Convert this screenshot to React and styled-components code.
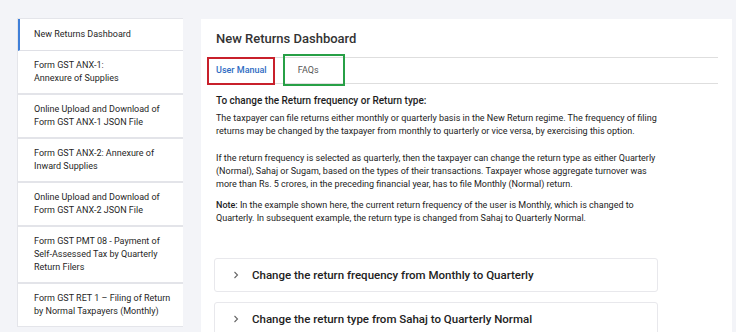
import React from "react";
import styled, { createGlobalStyle } from "styled-components";

const GlobalStyle = createGlobalStyle`
  body {
    margin: 0;
    background: #f3f4f8;
    font-family: Roboto, "Liberation Sans", sans-serif;
    color: #212121;
  }
`;

const Page = styled.div`
  display: flex;
  align-items: flex-start;
  gap: 18px;
  padding: 18px 4px 0 17px;
  height: 332px;
  box-sizing: border-box;
  overflow: hidden;
`;

const SideColumn = styled.div`
  display: flex;
  flex-direction: column;
  gap: 7px;
  width: 166px;
  flex-shrink: 0;
`;

const Menu = styled.div`
  background: #fff;
  border: 1px solid #e4e5ea;
  border-right: none;
`;

const MenuItem = styled.div`
  padding: ${(p) => (p.$active ? "9px 6px 9px 14px" : "8px 6px 8px 16px")};
  border-left: ${(p) => (p.$active ? "2px solid #3f7fd8" : "none")};
  border-bottom: ${(p) => (p.$last ? "none" : p.$active ? "1px solid #dfe0e6" : "2px solid #e3e4e9")};
  font-size: 9px;
  line-height: 13px;
  color: #1f1f1f;
  white-space: nowrap;
`;

const NextCard = styled.div`
  height: 12px;
  background: #fff;
  border: 1px solid #c9cad3;
  border-radius: 4px;
`;

const Panel = styled.div`
  flex: 1;
  margin-top: 1px;
  background: #fff;
  padding: 12px 14px 0 15px;
  height: 340px;
`;

const Title = styled.h1`
  margin: 0 0 10px;
  font-size: 13px;
  line-height: 16px;
  font-weight: 500;
  color: #333;
`;

const TabRow = styled.div`
  display: flex;
  align-items: center;
  gap: 31px;
  height: 27px;
  box-sizing: border-box;
  border-top: 1px solid #dedede;
  border-bottom: 1px solid #dedede;
`;

const Tab = styled.div`
  position: relative;
  font-size: 9px;
  line-height: 25px;
  color: ${(p) => (p.$active ? "#2f6cc3" : "#555")};
  font-weight: ${(p) => (p.$active ? 500 : 400)};
`;

const Highlight = styled.span`
  position: absolute;
  top: ${(p) => p.$top}px;
  bottom: ${(p) => p.$bottom}px;
  left: ${(p) => p.$left}px;
  right: ${(p) => p.$right}px;
  border: 2px solid ${(p) => p.$color};
  pointer-events: none;
`;

const Content = styled.div`
  margin-top: 10px;
  max-width: 452px;
`;

const Heading = styled.div`
  font-size: 10px;
  line-height: 13px;
  font-weight: 500;
  color: #1d1d1d;
  margin-bottom: 5px;
`;

const Para = styled.p`
  margin: 0 0 ${(p) => p.$gap || 0}px;
  font-size: 9px;
  line-height: 13px;
  color: #222;
`;

const Strong = styled.span`
  font-weight: 500;
`;

const Accordions = styled.div`
  display: flex;
  flex-direction: column;
  gap: 10px;
  width: 444px;
  margin: 33px 0 0 -2px;
`;

const AccordionHead = styled.div`
  display: flex;
  align-items: center;
  gap: 13px;
  height: 34px;
  box-sizing: border-box;
  padding-left: 18px;
  border: 1px solid #e8e8ec;
  border-radius: 3px;
  font-size: 11.5px;
  font-weight: 500;
  color: #222;
`;

const Chevron = () => (
  <svg width="6" height="8" viewBox="0 0 6 8">
    <path d="M1.5 1 L4.5 4 L1.5 7" fill="none" stroke="#666" strokeWidth="1.1" />
  </svg>
);

const menu = [
  ["New Returns Dashboard"],
  ["Form GST ANX-1:", "Annexure of Supplies"],
  ["Online Upload and Download of", "Form GST ANX-1 JSON File"],
  ["Form GST ANX-2: Annexure of", "Inward Supplies"],
  ["Online Upload and Download of", "Form GST ANX-2 JSON File"],
  ["Form GST PMT 08 - Payment of", "Self-Assessed Tax by Quarterly", "Return Filers"],
  ["Form GST RET 1 \u2013 Filing of Return", "by Normal Taxpayers (Monthly)"],
];

export default function App() {
  return (
    <>
      <GlobalStyle />
      <Page>
        <SideColumn>
          <Menu>
            {menu.map((lines, i) => (
              <MenuItem key={i} $active={i === 0} $last={i === menu.length - 1}>
                {lines.map((l, j) => (
                  <div key={j}>{l}</div>
                ))}
              </MenuItem>
            ))}
          </Menu>
          <NextCard />
        </SideColumn>
        <Panel>
          <Title>New Returns Dashboard</Title>
          <TabRow>
            <Tab $active>
              User Manual
              <Highlight $color="#c8202b" $top={-1} $bottom={-2} $left={-9} $right={-8} />
            </Tab>
            <Tab>
              FAQs
              <Highlight $color="#27a046" $top={-4} $bottom={-3} $left={-15} $right={-26} />
            </Tab>
          </TabRow>
          <Content>
            <Heading>To change the Return frequency or Return type:</Heading>
            <Para $gap={14}>
              The taxpayer can file returns either monthly or quarterly basis in the New Return
              regime. The frequency of filing returns may be changed by the taxpayer from monthly
              to quarterly or vice versa, by exercising this option.
            </Para>
            <Para $gap={8}>
              If the return frequency is selected as quarterly, then the taxpayer can change the
              return type as either Quarterly (Normal), Sahaj or Sugam, based on the types of their
              transactions. Taxpayer whose aggregate turnover was more than Rs. 5 crores, in the
              preceding financial year, has to file Monthly (Normal) return.
            </Para>
            <Para>
              <Strong>Note:</Strong> In the example shown here, the current return frequency of the
              user is Monthly, which is changed to Quarterly. In subsequent example, the return type
              is changed from Sahaj to Quarterly Normal.
            </Para>
          </Content>
          <Accordions>
            <AccordionHead>
              <Chevron />
              Change the return frequency from Monthly to Quarterly
            </AccordionHead>
            <AccordionHead>
              <Chevron />
              Change the return type from Sahaj to Quarterly Normal
            </AccordionHead>
          </Accordions>
        </Panel>
      </Page>
    </>
  );
}
